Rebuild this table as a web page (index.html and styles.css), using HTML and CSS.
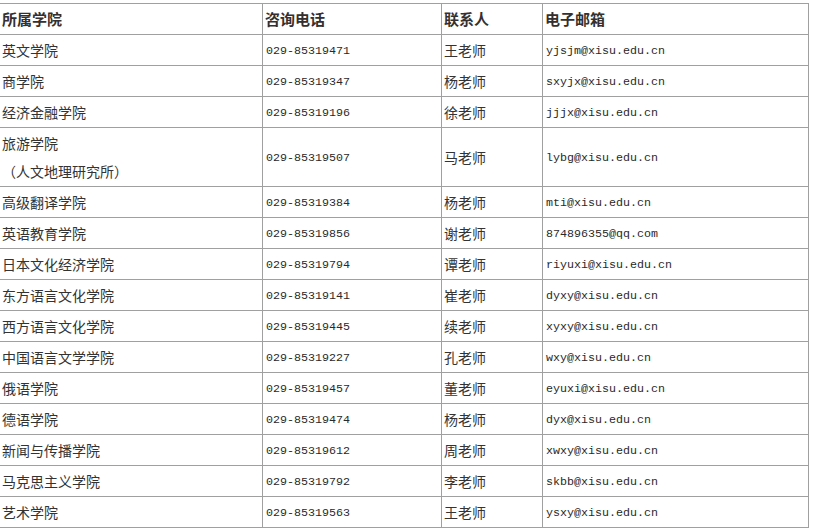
FILE: index.html
```html
<!DOCTYPE html>
<html lang="zh-CN">
<head>
<meta charset="utf-8">
<title>各学院联系方式</title>
<link rel="stylesheet" href="styles.css">
</head>
<body>
<table class="contacts">
  <thead>
    <tr>
      <th class="c-college">所属学院</th>
      <th class="c-phone">咨询电话</th>
      <th class="c-person">联系人</th>
      <th class="c-mail">电子邮箱</th>
    </tr>
  </thead>
  <tbody>
    <tr><td>英文学院</td><td class="mono">029-85319471</td><td>王老师</td><td class="mono">yjsjm@xisu.edu.cn</td></tr>
    <tr><td>商学院</td><td class="mono">029-85319347</td><td>杨老师</td><td class="mono">sxyjx@xisu.edu.cn</td></tr>
    <tr><td>经济金融学院</td><td class="mono">029-85319196</td><td>徐老师</td><td class="mono">jjjx@xisu.edu.cn</td></tr>
    <tr><td>旅游学院<br>（人文地理研究所）</td><td class="mono">029-85319507</td><td>马老师</td><td class="mono">lybg@xisu.edu.cn</td></tr>
    <tr><td>高级翻译学院</td><td class="mono">029-85319384</td><td>杨老师</td><td class="mono">mti@xisu.edu.cn</td></tr>
    <tr><td>英语教育学院</td><td class="mono">029-85319856</td><td>谢老师</td><td class="mono">874896355@qq.com</td></tr>
    <tr><td>日本文化经济学院</td><td class="mono">029-85319794</td><td>谭老师</td><td class="mono">riyuxi@xisu.edu.cn</td></tr>
    <tr><td>东方语言文化学院</td><td class="mono">029-85319141</td><td>崔老师</td><td class="mono">dyxy@xisu.edu.cn</td></tr>
    <tr><td>西方语言文化学院</td><td class="mono">029-85319445</td><td>续老师</td><td class="mono">xyxy@xisu.edu.cn</td></tr>
    <tr><td>中国语言文学学院</td><td class="mono">029-85319227</td><td>孔老师</td><td class="mono">wxy@xisu.edu.cn</td></tr>
    <tr><td>俄语学院</td><td class="mono">029-85319457</td><td>董老师</td><td class="mono">eyuxi@xisu.edu.cn</td></tr>
    <tr><td>德语学院</td><td class="mono">029-85319474</td><td>杨老师</td><td class="mono">dyx@xisu.edu.cn</td></tr>
    <tr><td>新闻与传播学院</td><td class="mono">029-85319612</td><td>周老师</td><td class="mono">xwxy@xisu.edu.cn</td></tr>
    <tr><td>马克思主义学院</td><td class="mono">029-85319792</td><td>李老师</td><td class="mono">skbb@xisu.edu.cn</td></tr>
    <tr><td>艺术学院</td><td class="mono">029-85319563</td><td>王老师</td><td class="mono">ysxy@xisu.edu.cn</td></tr>
  </tbody>
</table>
</body>
</html>
```

FILE: styles.css
```css
html, body {
  margin: 0;
  padding: 0;
  background: #ffffff;
}

body {
  font-family: "Noto Sans CJK SC", "Noto Sans", sans-serif;
  color: #333333;
  overflow: hidden;
}

.contacts {
  margin: 3px 0 0 -1px;
  border-collapse: separate;
  border-spacing: 0;
  border-top: 1px solid #a0a0a0;
  border-left: 1px solid #a0a0a0;
  table-layout: fixed;
  width: 810px;
}

.contacts th,
.contacts td {
  box-sizing: border-box;
  border-right: 1px solid #a0a0a0;
  border-bottom: 1px solid #a0a0a0;
  padding: 1px 2px;
  line-height: 28px;
  text-align: left;
  vertical-align: middle;
  white-space: nowrap;
}

.contacts th {
  font-size: 15px;
  font-weight: bold;
  color: #35302f;
}

.contacts td {
  font-size: 14px;
  font-weight: normal;
}

.c-college { width: 263px; }
.c-phone { width: 179px; }
.c-person { width: 101px; }
.c-mail { width: 266px; }

.contacts td.mono {
  font-family: "Liberation Mono", "DejaVu Sans Mono", monospace;
  font-size: 11.67px;
  padding: 2px 2px 0 3px;
  color: #2a2a2a;
}
```
